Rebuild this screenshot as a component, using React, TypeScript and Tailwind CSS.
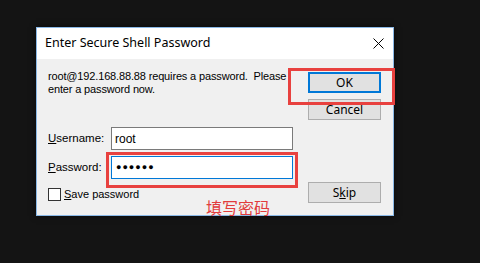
import React from "react";

const ui = { fontFamily: '"Noto Sans", "Liberation Sans", sans-serif' };
const body = { fontFamily: '"Liberation Sans", Arial, sans-serif' };

function WinButton({ children, primary }: { children: React.ReactNode; primary?: boolean }) {
  return (
    <div
      className={`h-[21px] w-[73px] flex items-center justify-center bg-[#e1e1e1] text-[12px] text-black ${
        primary ? "border-2 border-[#0078d7]" : "border border-[#adadad]"
      }`}
      style={ui}
    >
      {children}
    </div>
  );
}

export default function App() {
  return (
    <div className="relative w-[480px] h-[263px] overflow-hidden bg-[#141414] pt-[27px] pl-[36px]" style={ui}>
      {/* dialog window */}
      <div className="w-[358px] h-[189px] border border-[#8ab8e6] bg-[#f0f0f0] flex flex-col shadow-[0_0_6px_rgba(0,0,0,0.6)]">
        <div className="h-[31px] bg-white flex items-center justify-between pl-[8px] pr-[9px]">
          <span className="text-[12.5px] text-black">Enter Secure Shell Password</span>
          <svg width="11" height="11" viewBox="0 0 11 11" className="text-black">
            <path d="M0.5 0.5 L10.5 10.5 M10.5 0.5 L0.5 10.5" stroke="currentColor" strokeWidth="1" fill="none" />
          </svg>
        </div>

        <div className="flex-1 flex pl-[11px] pr-[12px]" style={body}>
          <div className="flex-1 min-w-0 flex flex-col">
            <p className="mt-[11px] text-[11px] tracking-[-0.15px] leading-[13px] text-black whitespace-nowrap">
              root@192.168.88.88 requires a password.&nbsp; Please
              <br />
              enter a password now.
            </p>

            <div className="mt-[31px] flex items-center">
              <span className="w-[63px] text-[11.5px] text-black">
                <span className="underline">U</span>sername:
              </span>
              <div className="w-[182px] h-[23px] bg-white border border-[#7a7a7a] flex items-center pl-[3px] text-[12px] text-black">
                root
              </div>
            </div>

            <div className="mt-[6px] flex items-center">
              <span className="w-[63px] text-[11.5px] text-black">
                <span className="underline">P</span>assword:
              </span>
              <div className="w-[182px] h-[23px] bg-white border border-[#0078d7] flex items-center pl-[4px] text-[9px] tracking-[1px] text-black">
                ●●●●●●
              </div>
            </div>

            <div className="mt-[9px] flex items-center gap-[3px]">
              <div className="w-[13px] h-[13px] bg-white border border-[#333333]" />
              <span className="text-[11px] text-black leading-[13px]">
                <span className="underline">S</span>ave password
              </span>
            </div>
          </div>

          <div className="w-[73px] shrink-0 flex flex-col">
            <div className="mt-[13px]">
              <WinButton primary>OK</WinButton>
            </div>
            <div className="mt-[6px]">
              <WinButton>Cancel</WinButton>
            </div>
            <div className="mt-[62px]">
              <WinButton>
                <span>
                  S<span className="underline">k</span>ip
                </span>
              </WinButton>
            </div>
          </div>
        </div>
      </div>

      {/* red annotations */}
      <div className="absolute left-[288px] top-[68px] w-[107px] h-[37px] border-[3px] border-[#e8413f]" />
      <div className="absolute left-[106px] top-[152px] w-[192px] h-[36px] border-[3px] border-[#e8413f]" />
      <span
        className="absolute left-[206px] top-[198px] text-[16px] leading-[18px] text-[#e23c3c]"
        style={{ fontFamily: '"Noto Sans CJK SC", sans-serif' }}
      >
        填写密码
      </span>
    </div>
  );
}
